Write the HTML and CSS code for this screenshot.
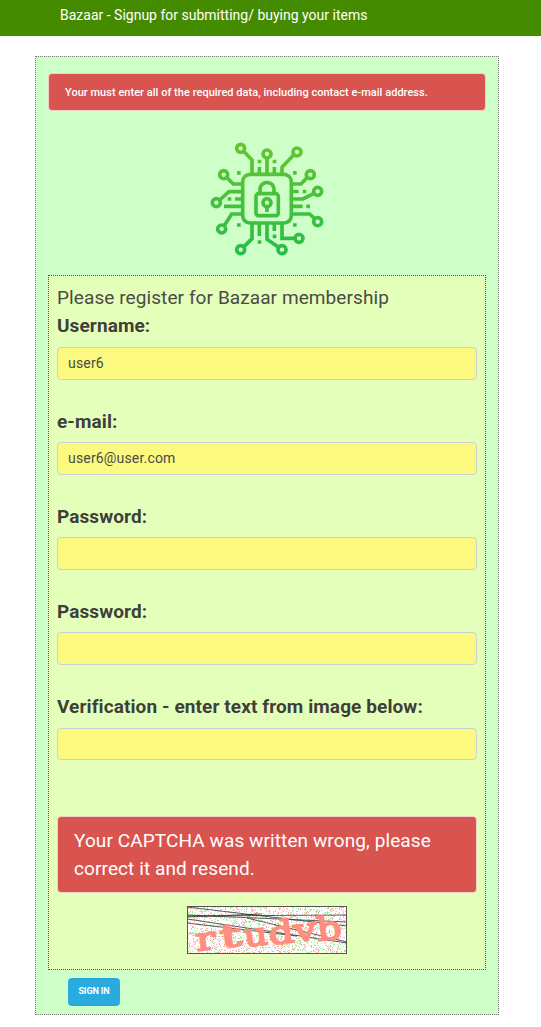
FILE: index.html
```html
<!DOCTYPE html>
<html lang="en">
<head>
<meta charset="utf-8">
<title>Bazaar - Signup</title>
<link rel="stylesheet" href="styles.css">
</head>
<body>
<header class="topbar">Bazaar - Signup for submitting/ buying your items</header>
<main class="panel">
  <div class="alert alert-small">Your must enter all of the required data, including contact e-mail address.</div>
  <svg class="logo" viewBox="0 0 375 375" aria-hidden="true">
    <defs><linearGradient id="g" gradientUnits="userSpaceOnUse" x1="0" y1="20" x2="0" y2="360"><stop offset="0" stop-color="#67c52f"/><stop offset="1" stop-color="#27bd49"/></linearGradient></defs>
    <g fill="none" stroke="url(#g)" stroke-width="11">
      <rect x="113" y="118" width="146" height="146" rx="22"/>
      <rect x="153" y="176" width="67" height="66" rx="8"/>
      <path d="M165 176V163a21 21 0 0 1 42 0V176"/>
      <circle cx="186" cy="203" r="12"/><path d="M186 213V231"/>
      <path d="M116 49L141 75V118M186 67V118M266 60L231 97V118M65 127L85 147H113M44 195L72 170H113M57 214H113M57 273L80 237H113M117 335L141 311V264M221 337L186 313V264M231 264V310H271M259 147H288L306 128M259 192H294L327 175M259 214H293M259 237H314L330 252M163 96V118M208 96V118M163 264V303M208 264V288"/>
      <circle cx="107" cy="40" r="12"/><circle cx="186" cy="57" r="12"/><circle cx="276" cy="51" r="12"/>
      <circle cx="56" cy="119" r="12"/><circle cx="34" cy="203" r="12"/><circle cx="50" cy="282" r="12"/>
      <circle cx="107" cy="344" r="12"/><circle cx="231" cy="344" r="12"/><circle cx="282" cy="310" r="12"/>
      <circle cx="316" cy="119" r="12"/><circle cx="338" cy="169" r="12"/><circle cx="338" cy="260" r="12"/>
      <path d="M158 79.500h11M203 79.500h11M96 113.500h11M264 113.500h11M68 192h11M90 192h23M259 169.500h22M293 169.500h11M304 214h11M96 270h11M264 270h11M158 321h11M203 304h11"/>
    </g>
  </svg>
  <form class="form">
    <div class="intro">Please register for Bazaar membership</div>
    <label class="field"><span class="name">Username:</span><input class="input" type="text" value="user6"></label>
    <label class="field"><span class="name">e-mail:</span><input class="input" type="text" value="user6@user.com"></label>
    <label class="field"><span class="name">Password:</span><input class="input" type="password"></label>
    <label class="field"><span class="name">Password:</span><input class="input" type="password"></label>
    <label class="field"><span class="name">Verification - enter text from image below:</span><input class="input input-last" type="text"></label>
    <div class="alert alert-large">Your CAPTCHA was written wrong, please correct it and resend.</div>
    <svg class="captcha" viewBox="0 0 160 48">
      <rect width="160" height="48" fill="#fff"/>
      <path id="green" stroke="#9df59b"/>
      <path id="red" stroke="#ffaaa0"/>
      <g class="lines"><path d="M0 1L160 20M0 10L160 9M0 9L160 16M0 13L160 37M0 17L110 30M60 12L160 36M0 11L75 8"/></g>
      <g class="glyphs">
        <text transform="translate(10 45) rotate(-7)" textLength="20" lengthAdjust="spacingAndGlyphs">r</text>
        <text transform="translate(34 42) rotate(-7)" textLength="22" lengthAdjust="spacingAndGlyphs">t</text>
        <text transform="translate(58 41) rotate(-7)" textLength="24" lengthAdjust="spacingAndGlyphs">u</text>
        <text transform="translate(83 39) rotate(-7)" textLength="25" lengthAdjust="spacingAndGlyphs">d</text>
        <text transform="translate(108 36) rotate(-7)" textLength="23" lengthAdjust="spacingAndGlyphs">v</text>
        <text transform="translate(131 35) rotate(-7)" textLength="25" lengthAdjust="spacingAndGlyphs">b</text>
      </g>
      <rect x=".5" y=".5" width="159" height="47" fill="none" stroke="#555"/>
    </svg>
  </form>
  <button class="submit" type="button">SIGN IN</button>
</main>
<script src="captcha.js"></script>
</body>
</html>
```
FILE: styles.css
```css
* { box-sizing: border-box; }
body { margin: 0; background: #fff; color: #3e3f3a; font-family: Roboto, sans-serif; }
.topbar { height: 36px; padding: 5px 60px 0; background: #458b00; color: #fff; font-size: 14px; line-height: 20px; white-space: nowrap; }
.panel { width: 464px; height: 959px; margin: 20px 0 0 35px; padding: 16px 12px 0; border: 1px dotted #777; background: #cfffc9; display: flex; flex-direction: column; align-items: stretch; }
.alert { border: 1px solid #f2cfca; border-radius: 4px; background: #d9534f; color: #fff; padding: 0 16px; }
.alert-small { height: 38px; padding-top: 1px; font-size: 11px; line-height: 36px; font-weight: 500; letter-spacing: .03px; white-space: nowrap; }
.logo { width: 125px; height: 125px; margin: 24px 0 15px 157px; flex: none; }
.form { height: 695px; padding: 8px; border: 1px dotted #555; background: #e4ffb9; display: flex; flex-direction: column; font-size: 19px; line-height: 28px; letter-spacing: .1px; }
.intro { height: 28px; color: #4a4b45; letter-spacing: .09px; }
.field { display: block; height: 95px; flex: none; }
.field + .field .name { padding-top: 1px; }
.name { display: block; height: 35px; font-weight: 700; }
.input { display: block; width: 100%; height: 33px; padding: 0 10px 2px; border: 1px solid #cfcfd4; border-radius: 4px; background: #fbf980; color: #4a4b45; font: 14px Roboto, sans-serif; letter-spacing: .17px; }
.input-last { height: 32px; margin-top: 1px; }
.alert-large { height: 77px; margin-top: 29px; padding-top: 10px; flex: none; }
.captcha { width: 160px; height: 48px; margin: 13px auto 0; flex: none; }
.lines { fill: none; stroke: #333; stroke-width: .8; }
.glyphs { fill: #ff8e80; stroke: #ff8e80; stroke-width: 1.7; font: 400 32px "DejaVu Serif", serif; letter-spacing: 0; }
.submit { width: 52px; height: 28px; margin: 8px 0 0 20px; padding: 0 0 2px; border: 0; border-radius: 4px; background: #29abe0; color: #fff; font: 700 9px Roboto, sans-serif; letter-spacing: -.1px; }
```
FILE: captcha.js
```js
let seed = 7;
const random = () => (seed = (seed * 16807) % 2147483647) / 2147483647;
for (const id of ["green", "red"]) {
  let d = "";
  for (let i = 0; i < 1000; i++) {
    d += `M${Math.floor(random() * 160)} ${Math.floor(random() * 48) + 0.5}h1`;
  }
  document.getElementById(id).setAttribute("d", d);
}
```
